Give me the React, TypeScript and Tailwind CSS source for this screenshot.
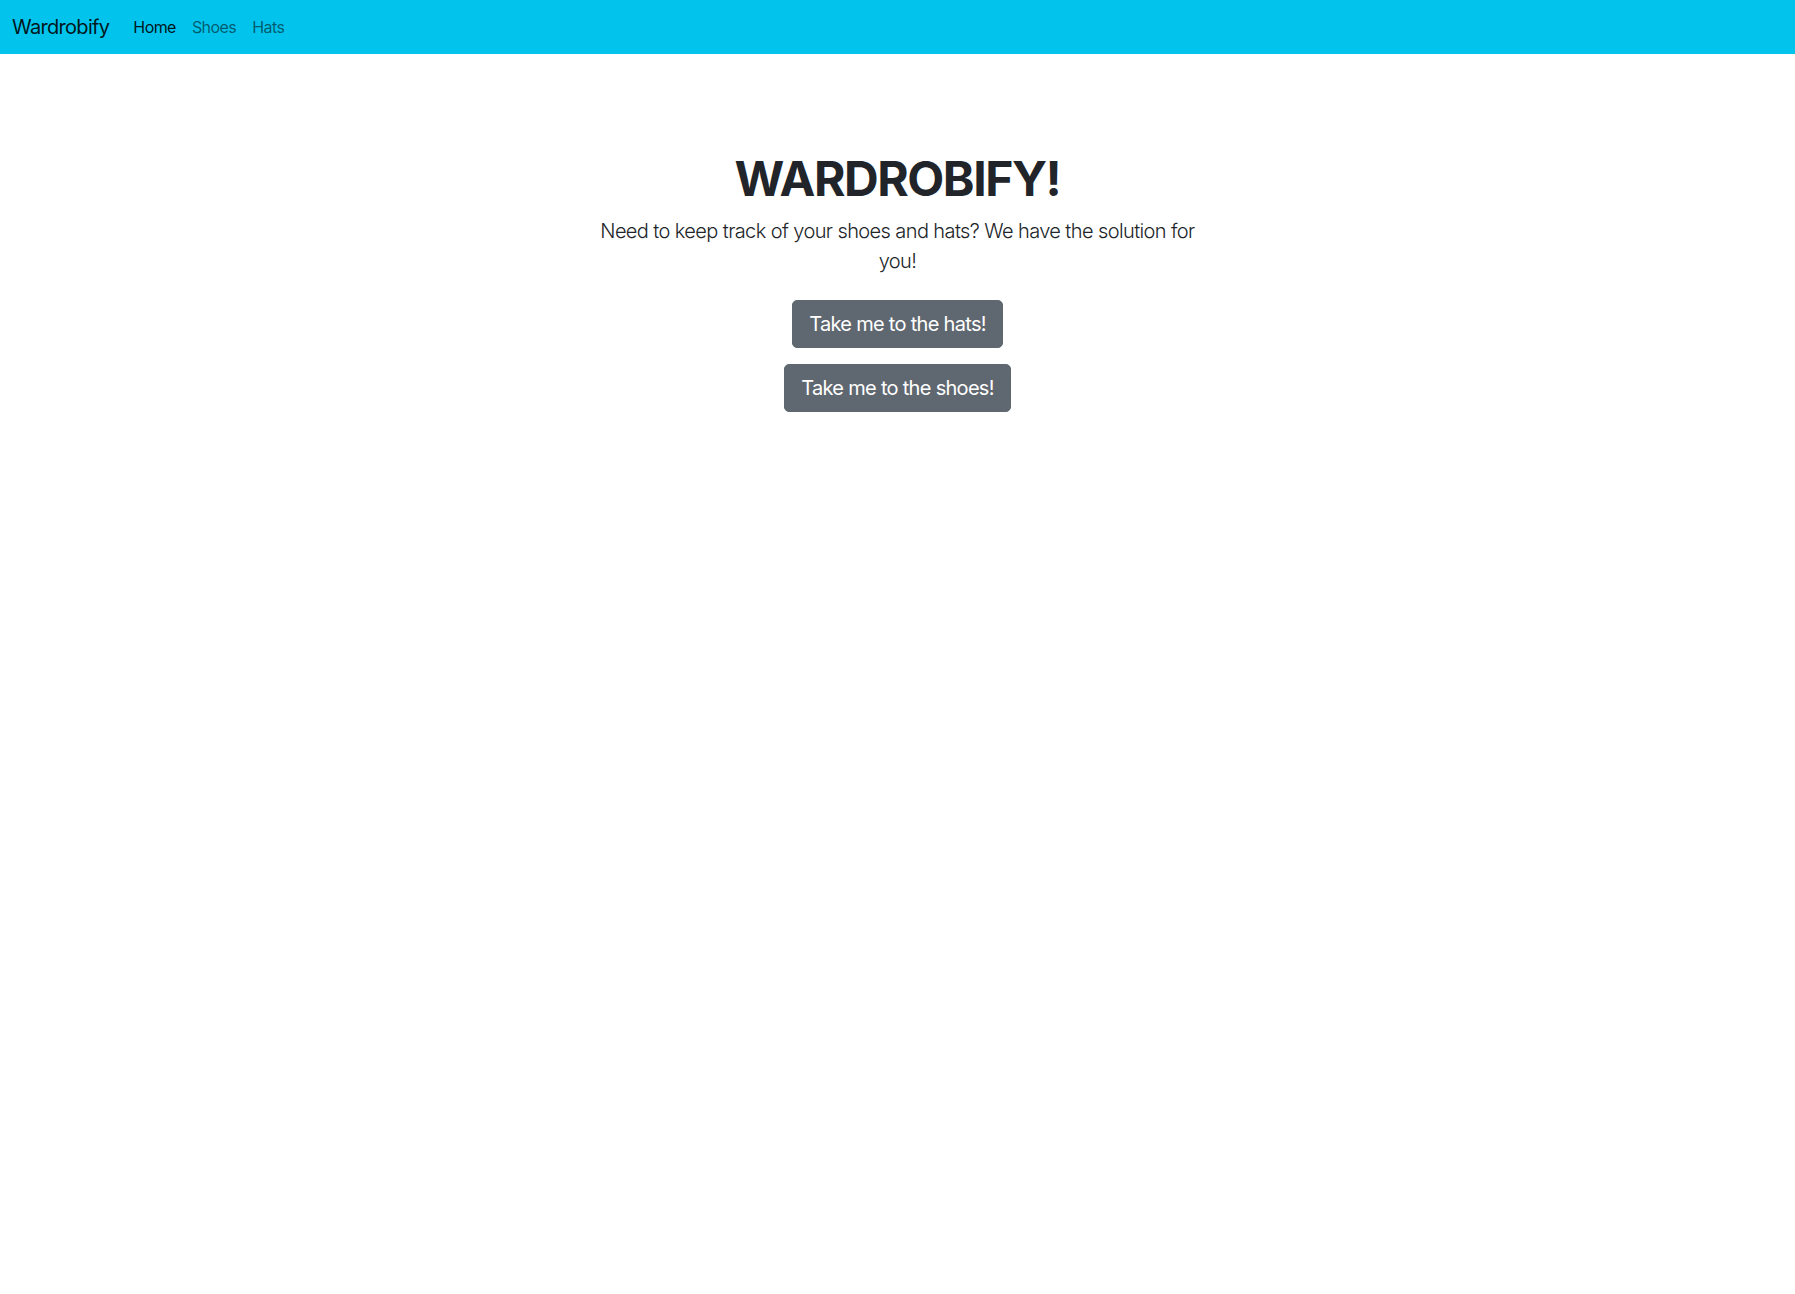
export default function App() {
  const font = { fontFamily: 'Inter, "Noto Sans", sans-serif' };
  return (
    <div className="min-h-[1294px] bg-white text-[#212529]" style={font}>
      <nav className="flex h-[54px] items-center bg-[#01c3eb] px-3">
        <a className="mr-4 text-[20px] leading-[30px] tracking-[-0.035em] text-black/90">Wardrobify</a>
        <div className="flex items-center text-[16px] leading-6 tracking-[-0.035em]">
          <a className="px-2 text-black/90">Home</a>
          <a className="px-2 text-black/55">Shoes</a>
          <a className="px-2 text-black/55">Hats</a>
        </div>
      </nav>
      <main className="my-12 px-6 py-12 text-center">
        <h1 className="mb-2 text-[48px] font-bold leading-[1.2] tracking-[-0.03em]">WARDROBIFY!</h1>
        <div className="mx-auto w-[610px]">
          <p className="mb-6 text-[20px] font-light leading-[30px] tracking-[-0.03em]">
            Need to keep track of your shoes and hats? We have the solution for you!
          </p>
          <div className="flex flex-col items-center gap-4">
            <button className="rounded-[5px] border border-[#5f6770] bg-[#5f6770] px-4 py-2 text-[20px] leading-[30px] tracking-[-0.035em] text-white">
              Take me to the hats!
            </button>
            <button className="rounded-[5px] border border-[#5f6770] bg-[#5f6770] px-4 py-2 text-[20px] leading-[30px] tracking-[-0.035em] text-white">
              Take me to the shoes!
            </button>
          </div>
        </div>
      </main>
    </div>
  );
}
